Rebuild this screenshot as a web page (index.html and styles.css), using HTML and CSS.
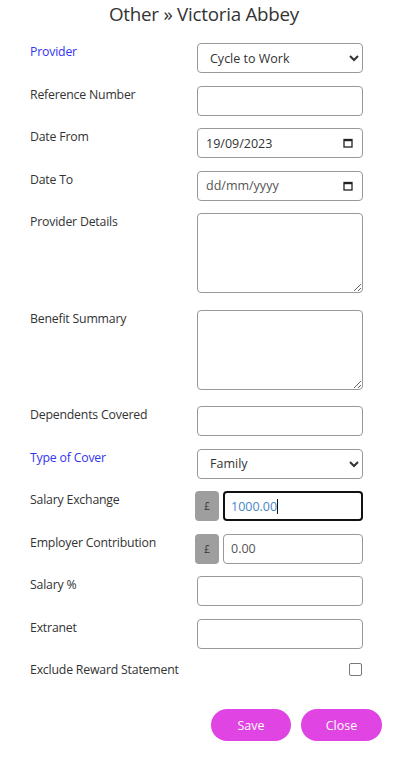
FILE: index.html
```html
<!DOCTYPE html>
<html lang="en">
<head>
<meta charset="utf-8">
<title>Other » Victoria Abbey</title>
<link rel="stylesheet" href="styles.css">
</head>
<body>
<div class="page">
  <h1 class="title">Other » Victoria Abbey</h1>
  <form class="form">
    <div class="row">
      <label class="label req">Provider</label>
      <select class="ctl select"><option>Cycle to Work</option></select>
    </div>
    <div class="row">
      <label class="label">Reference Number</label>
      <input class="ctl" type="text">
    </div>
    <div class="row">
      <label class="label">Date From</label>
      <div class="ctl date"><span class="date-val">19/09/2023</span><svg class="cal" width="10" height="10" viewBox="0 0 10 10"><rect x="1" y="1.5" width="8" height="7.5" fill="none" stroke="#222" stroke-width="1.3"/><rect x="1" y="1" width="8" height="2.2" fill="#222"/></svg></div>
    </div>
    <div class="row">
      <label class="label">Date To</label>
      <div class="ctl date"><span class="date-ph">dd/mm/yyyy</span><svg class="cal" width="10" height="10" viewBox="0 0 10 10"><rect x="1" y="1.5" width="8" height="7.5" fill="none" stroke="#222" stroke-width="1.3"/><rect x="1" y="1" width="8" height="2.2" fill="#222"/></svg></div>
    </div>
    <div class="row row-tall">
      <label class="label">Provider Details</label>
      <textarea class="ctl area"></textarea>
    </div>
    <div class="row row-tall">
      <label class="label">Benefit Summary</label>
      <textarea class="ctl area"></textarea>
    </div>
    <div class="row">
      <label class="label">Dependents Covered</label>
      <input class="ctl" type="text">
    </div>
    <div class="row">
      <label class="label req">Type of Cover</label>
      <select class="ctl select"><option>Family</option></select>
    </div>
    <div class="row">
      <label class="label">Salary Exchange</label>
      <div class="group">
        <span class="addon">£</span>
        <div class="ctl gin focus"><span class="focus-val">1000.00</span><span class="caret"></span></div>
      </div>
    </div>
    <div class="row">
      <label class="label">Employer Contribution</label>
      <div class="group">
        <span class="addon">£</span>
        <input class="ctl gin" type="text" value="0.00">
      </div>
    </div>
    <div class="row">
      <label class="label">Salary %</label>
      <input class="ctl" type="text">
    </div>
    <div class="row">
      <label class="label">Extranet</label>
      <input class="ctl" type="text">
    </div>
    <div class="row row-check">
      <label class="label">Exclude Reward Statement</label>
      <span class="check"></span>
    </div>
    <div class="actions">
      <button type="button" class="btn btn-save">Save</button>
      <button type="button" class="btn btn-close">Close</button>
    </div>
  </form>
</div>
</body>
</html>
```
FILE: styles.css
```css
* { box-sizing: border-box; }
html, body { margin: 0; padding: 0; background: #fff; }
body {
  font-family: "Open Sans", "Noto Sans", sans-serif;
  color: #333;
  width: 408px;
}
.page { padding-top: 2px; }
.title {
  margin: 0;
  text-align: center;
  font-size: 18.8px;
  line-height: 25px;
  font-weight: 500;
  color: #333;
  letter-spacing: -0.25px;
}
.form {
  margin-top: 16px;
  padding-left: 30px;
}
.row {
  display: grid;
  grid-template-columns: 167px 166px;
  align-items: start;
  height: 30px;
  margin-bottom: 12.5px;
}
.row-tall { height: 80px; margin-bottom: 16.5px; }
.label {
  font-size: 12.3px;
  line-height: 18px;
  padding-top: 0;
  color: #333;
  letter-spacing: -0.2px;
  white-space: nowrap;
}
.label.req { color: #3434f2; }
.ctl {
  display: block;
  width: 166px;
  height: 30px;
  margin: 0;
  border: 1px solid #999;
  border-radius: 4px;
  background: #fff;
  font-family: "Open Sans", "Noto Sans", sans-serif;
  font-size: 12.5px;
  color: #333;
  padding: 0 8px;
  outline: none;
}
.select {
  padding-left: 8px;
  color: #333;
}
.date {
  display: flex;
  align-items: center;
  justify-content: space-between;
  padding: 0 9px 0 8px;
}
.date-val { color: #333; }
.date-ph { color: #555; }
.cal { display: block; }
.area {
  height: 80px;
  resize: vertical;
  padding: 6px 8px;
}
.group {
  display: flex;
  gap: 4px;
  margin-left: -2px;
}
.addon {
  width: 24px;
  height: 30px;
  background: #9e9e9e;
  border-radius: 4px;
  display: flex;
  align-items: center;
  justify-content: center;
  font-size: 10px;
  color: #333;
}
.gin {
  width: 140px;
  padding: 0 7px;
  color: #555;
}
.focus {
  border: 2px solid #111;
  display: flex;
  align-items: center;
  padding: 0 6px;
}
.focus-val { color: #4a86c4; }
.caret {
  width: 1px;
  height: 15px;
  background: #111;
  margin-left: 0;
}
.row-check {
  height: 18px;
  margin-top: 0;
  margin-bottom: 30px;
}
.check {
  justify-self: end;
  margin-top: 2px;
  margin-right: 1px;
  width: 13px;
  height: 13px;
  border: 1px solid #777;
  border-radius: 2px;
  background: #fff;
}
.actions {
  display: flex;
  justify-content: flex-end;
  gap: 10px;
  padding-right: 26px;
}
.btn {
  height: 32px;
  border: none;
  border-radius: 16px;
  background: #e045e3;
  color: #fff;
  font-family: "Open Sans", "Noto Sans", sans-serif;
  font-size: 12.5px;
  padding: 0;
  cursor: pointer;
}
.btn-save { width: 80px; }
.btn-close { width: 81px; }
```
